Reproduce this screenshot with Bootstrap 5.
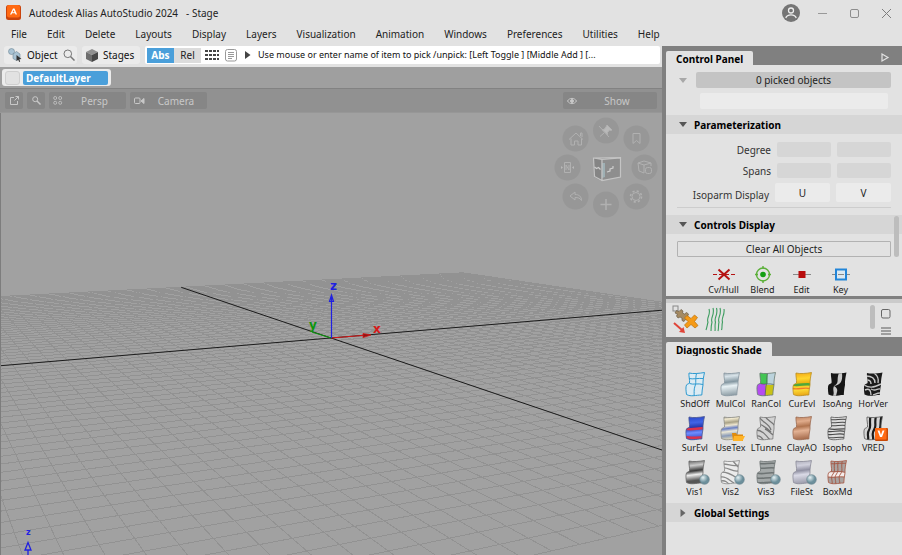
<!DOCTYPE html>
<html lang="en">
<head>
<meta charset="utf-8">
<meta name="viewport" content="width=device-width, initial-scale=1">
<title>Autodesk Alias AutoStudio 2024 - Stage</title>
<link href="https://cdn.jsdelivr.net/npm/bootstrap@5.3.0/dist/css/bootstrap.min.css" rel="stylesheet">
<style>
  body { font: 10px/14px "Noto Sans", "Open Sans", sans-serif; color: #222; background: #e2e2e2; }
  button, input { font: inherit; color: inherit; border: 0; padding: 0; min-width: 0; }
  button { background: none; }
  svg { display: block; flex: none; }
  .titlebar { height: 25px; padding: 0 0 0 6px; }
  .win-btn { width: 32px; height: 24px; }
  .menubar { height: 21px; padding: 0 11px 3px; gap: 20px; }
  .menubar a { color: #222; text-decoration: none; }
  .promptbar { height: 21px; padding: 0 2px 3px 4px; gap: 5px; }
  .tool { height: 18px; background: #ebebeb; border-radius: 3px; padding: 0 4px; gap: 5px; color: #111; }
  .tool-object { width: 73px; }
  .tool-stages { width: 58px; }
  .prompt { background: #fff; height: 18px; border-radius: 2px; padding-left: 2px; min-width: 0; }
  .seg { width: 27px; height: 15px; background: #dcdcdc; }
  .seg.on { background: #4a9fda; color: #fff; font-weight: 700; }
  .prompt-text { background: transparent; color: #111; outline: 0; padding: 0 0 0 7px; font-size: 9px; }
  .layerbar { height: 22px; background: #9f9f9f; padding: 2px 2px 0; border-bottom: 1px solid #828282; }
  .layer-chip { width: 109px; height: 17px; background: #ececec; border-radius: 3px; padding: 0 3px; gap: 3px; }
  .layer-box { width: 15px; height: 14px; background: #e2e2e2; border: 1px solid #cfcfcf; border-radius: 3px; appearance: none; }
  .layer-name { height: 14px; background: #4a9fda; color: #fff; font-weight: 700; text-align: left; padding-left: 3px; border-radius: 2px; }
  .viewbar { height: 24px; background: #919191; padding: 0 5px; gap: 4px; border-bottom: 1px solid #979797; }
  .vbtn { height: 17px; width: 18px; background: #868686; border-radius: 2px; color: #c8c8c8; }
  .vbtn-wide { width: 77px; padding-left: 4px; }
  .vbtn-show { width: 94px; padding-left: 4px; }
  .viewport { background: #a1a1a1; border-left: 1px solid #7d7d7d; min-height: 0; }
  .scene { width: 100%; height: 100%; }
  .work { min-width: 0; }
  .dock { width: 240px; background: #808080; padding: 5px 0 0 4px; }
  .ptab { background: #e2e2e2; color: #000; font-weight: 700; height: 15px; line-height: 17px; padding: 0 10px; border-radius: 2px 2px 0 0; }
  .ptab-row { height: 14px; }
  .panel-body { background: #e2e2e2; }
  .control-body { height: 231px; padding-top: 7px; }
  .picked { height: 16px; background: #c4c4c4; border-radius: 2px; }
  .picked-row { padding: 0 11px 0 13px; gap: 9px; }
  .name-in { height: 16px; background: #ebebeb; border-radius: 2px; margin: 5px 14px 6px 34px; }
  .section { height: 19px; background: #d6d6d6; color: #000; font-weight: 700; padding-left: 13px; gap: 7px; width: 100%; }
  .params { padding: 5px 11px 0; }
  .prow { height: 21px; gap: 6px; }
  .prow-label { color: #333; text-align: right; }
  .prow .cell { width: 54px; height: 15px; background: #d6d6d6; border-radius: 2px; }
  .cell-btn { width: 55px; height: 19px; background: #ebebeb; border-radius: 2px; }
  .rule { height: 1px; background: #cdcdcd; margin: 5px 11px 7px; }
  .clear-btn { height: 16px; border: 1px solid #b2b2b2; border-radius: 1px; line-height: 14px; }
  .clear-row { padding: 7px 11px 9px; }
  .disp-row { padding-left: 38px; }
  .disp-row button { width: 39px; font-size: 9px; }
  .shelf { height: 38px; background: #e2e2e2; margin: 3px 0 5px; border-top: 4px solid #cbcbcb; padding: 2px 11px 0 5px; gap: 6px; }
  .thumb-v { width: 5px; background: #bdbdbd; border-radius: 3px; }
  .over-thumb { right: 3px; top: 170px; height: 41px; }
  .shades { display: grid; grid-template-columns: repeat(6, 1fr); padding: 15px 11px 4px; row-gap: 4px; }
  .shades button { height: 40px; font-size: 9px; }
  .shades svg { margin: 0 auto; }
  .orb { fill: #979797; }
  .ghost { fill: none; stroke: #b1b1b1; stroke-width: 1; }
  .axis-label { font: 700 12px "DejaVu Sans", sans-serif; }
  .axis-label-sm { font: 700 8px "DejaVu Sans", sans-serif; }
</style>
</head>
<body class="vh-100 d-flex flex-column overflow-hidden">

<svg width="0" height="0" class="position-absolute" aria-hidden="true">
  <defs>
    <path id="patchShape" d="M5 1C9 2 15 1.500 20.500.500C19.500 5 18.800 9 19 13C18.300 16 18 20 17.800 23C12 23 7 25 2.500 22.500C2 19 1.500 15 2.500 13C3.500 11.500 5 12 5.500 11C6 8 4.500 4 5 1Z"/>
    <clipPath id="patch"><use href="#patchShape"/></clipPath>
    <use id="edge" href="#patchShape" fill="none" stroke-width=".8"/>
    <linearGradient id="gSteel" x1="0" y1="0" x2=".1" y2="1"><stop offset="0" stop-color="#8c99a2"/><stop offset=".2" stop-color="#d8e3e9"/><stop offset=".45" stop-color="#8497a1"/><stop offset=".62" stop-color="#e9f2f5"/><stop offset="1" stop-color="#93a2aa"/></linearGradient>
    <linearGradient id="gDark" x1="0" y1="0" x2=".1" y2="1"><stop offset="0" stop-color="#555"/><stop offset=".25" stop-color="#ccc"/><stop offset=".48" stop-color="#3a3a3a"/><stop offset=".65" stop-color="#eee"/><stop offset=".9" stop-color="#555"/></linearGradient>
    <linearGradient id="gClay" x1="0" y1="0" x2=".1" y2="1"><stop offset="0" stop-color="#b9805c"/><stop offset=".25" stop-color="#e0ac8c"/><stop offset=".47" stop-color="#b0744f"/><stop offset=".65" stop-color="#e3b294"/><stop offset="1" stop-color="#a96f50"/></linearGradient>
    <linearGradient id="gLilac" x1="0" y1="0" x2=".1" y2="1"><stop offset="0" stop-color="#a9a9b6"/><stop offset=".25" stop-color="#d0d0dc"/><stop offset=".47" stop-color="#9090a2"/><stop offset=".65" stop-color="#dadae6"/><stop offset="1" stop-color="#a0a0af"/></linearGradient>
    <linearGradient id="gBlue" x1="0" y1="0" x2=".1" y2="1"><stop offset="0" stop-color="#2540c0"/><stop offset=".3" stop-color="#4064e6"/><stop offset=".5" stop-color="#2336a8"/><stop offset=".7" stop-color="#6f8cff"/><stop offset="1" stop-color="#2540c0"/></linearGradient>
    <linearGradient id="gGold" x1="0" y1="0" x2=".1" y2="1"><stop offset="0" stop-color="#f0a010"/><stop offset=".3" stop-color="#ffd52e"/><stop offset=".5" stop-color="#e8b010"/><stop offset=".7" stop-color="#ffe13a"/><stop offset="1" stop-color="#e7a012"/></linearGradient>
    <linearGradient id="gTex" x1="0" y1="0" x2=".1" y2="1"><stop offset="0" stop-color="#777"/><stop offset=".14" stop-color="#f2ead0"/><stop offset=".3" stop-color="#a9a287"/><stop offset=".42" stop-color="#eee6cf"/><stop offset=".55" stop-color="#6a80c4"/><stop offset=".68" stop-color="#ece8d6"/><stop offset=".85" stop-color="#8a9bb8"/><stop offset="1" stop-color="#d8d2b6"/></linearGradient>
    <radialGradient id="gBall" cx=".35" cy=".3"><stop offset="0" stop-color="#e4f0f3"/><stop offset="1" stop-color="#6c8f9b"/></radialGradient>
    <g id="ball"><circle cx="20.500" cy="19.500" r="4.800" fill="url(#gBall)" stroke="#66828c" stroke-width=".6"/></g>
  </defs>
</svg>

<header class="titlebar d-flex align-items-center">
  <svg width="15" height="15" viewBox="0 0 15 15"><rect width="15" height="15" rx="2.500" fill="#c9430c"/><rect width="13" height="12.500" x="1" rx="2" fill="#ff6a13"/><path d="M4 9.500L7 3.500h1.500L11 9.500H9.500L9 8.300H6L5.500 9.500ZM6.500 7.200h2L7.600 5Z" fill="#fff"/></svg>
  <span class="ps-2">Autodesk Alias AutoStudio 2024</span>
  <span class="ps-2">- Stage</span>
  <div class="ms-auto d-flex align-items-center">
    <button type="button" aria-label="Account" class="me-1"><svg width="20" height="18" viewBox="0 0 20 18"><circle cx="9" cy="9" r="9" fill="#757575"/><g fill="none" stroke="#eee" stroke-width="1.300"><circle cx="9" cy="6.500" r="2.500"/><path d="M3.800 14C5 9.800 13 9.800 14.200 14"/></g></svg></button>
    <button type="button" aria-label="Minimize" class="win-btn"><svg width="32" height="24" fill="none" stroke="#999"><path d="M12 12.500h9"/></svg></button>
    <button type="button" aria-label="Maximize" class="win-btn"><svg width="32" height="24" fill="none" stroke="#8d8d8d"><rect x="12.500" y="8.500" width="8" height="8" rx="1.500"/></svg></button>
    <button type="button" aria-label="Close" class="win-btn"><svg width="32" height="24" fill="none" stroke="#7d7d7d"><path d="M12 8l9 9M21 8l-9 9"/></svg></button>
  </div>
</header>

<nav class="menubar d-flex align-items-center">
  <a href="#">File</a><a href="#">Edit</a><a href="#">Delete</a><a href="#">Layouts</a><a href="#">Display</a><a href="#">Layers</a><a href="#">Visualization</a><a href="#">Animation</a><a href="#">Windows</a><a href="#">Preferences</a><a href="#">Utilities</a><a href="#">Help</a>
</nav>

<main class="d-flex flex-fill overflow-hidden">
  <div class="work d-flex flex-column flex-fill">
    <div class="promptbar d-flex align-items-center">
      <button type="button" class="tool tool-object d-flex align-items-center">
        <svg width="14" height="14" viewBox="0 0 14 14"><g fill="#a9c3d4" stroke="#6f8795" stroke-width=".6"><circle cx="3.500" cy="3.500" r="3"/><path d="M5 6l3.500-2.500L12 6v4.500L8.500 12.500 5 10.500Z"/></g><path d="M8.500 7l5 4-2.200.3.900 2.200-1 .4-1-2.200L8.500 13Z" fill="#333"/></svg>
        <span>Object</span>
        <svg width="12" height="12" viewBox="0 0 12 12" fill="none" stroke="#777"><circle cx="4.800" cy="4.800" r="3.800"/><path d="M7.500 7.500l4 4" stroke-width="1.500"/></svg>
      </button>
      <button type="button" class="tool tool-stages d-flex align-items-center">
        <svg width="12" height="13" viewBox="0 0 12 13"><path d="M6 0l6 3-6 3-6-3Z" fill="#909090"/><path d="M0 3l6 3v7L0 10Z" fill="#6e6e6e"/><path d="M12 3L6 6v7l6-3Z" fill="#484848"/></svg>
        <span>Stages</span>
      </button>
      <div class="prompt d-flex align-items-center flex-fill">
        <button type="button" class="seg on">Abs</button>
        <button type="button" class="seg">Rel</button>
        <svg class="ms-1" width="16" height="12" viewBox="0 0 16 12" fill="#444"><path d="M0 1h3v2H0zM4 1h3v2H4zM8 1h3v2H8zM12 1h2v2h-2zM0 5h3v2H0zM4 5h3v2H4zM8 5h3v2H8zM12 5h2v2h-2zM0 9h3v2H0zM4 9h3v2H4zM8 9h3v2H8zM12 9h2v2h-2z"/></svg>
        <svg class="ms-1" width="12" height="13" viewBox="0 0 12 13" fill="none" stroke="#999"><rect x=".5" y=".5" width="11" height="11.500" rx="2"/><path d="M3 3.500h6M3 5.500h6M3 7.500h6M3 9.500h4"/></svg>
        <svg class="ms-2" width="6" height="8" viewBox="0 0 6 8"><path d="M0 0l5.500 4L0 8Z" fill="#444"/></svg>
        <input class="prompt-text flex-fill" type="text" aria-label="Prompt" value="Use mouse or enter name of item to pick /unpick: [Left Toggle ] [Middle Add ] [...">
      </div>
    </div>

    <div class="layerbar">
      <div class="layer-chip d-flex align-items-center">
        <input type="checkbox" class="layer-box m-0" aria-label="Layer visible">
        <button type="button" class="layer-name flex-fill">DefaultLayer</button>
      </div>
    </div>

    <div class="viewbar d-flex align-items-center">
      <button type="button" class="vbtn d-flex align-items-center justify-content-center" aria-label="Detach"><svg width="9" height="9" viewBox="0 0 9 9" fill="none" stroke="currentColor"><path d="M4 1.500H.500v7h7V5M5.500.500h3v3M8.500.500L4.500 4.500"/></svg></button>
      <button type="button" class="vbtn d-flex align-items-center justify-content-center" aria-label="Look at"><svg width="9" height="9" viewBox="0 0 9 9" fill="none" stroke="currentColor"><circle cx="3.200" cy="3.200" r="2.500"/><path d="M5 5l3.500 3.500" stroke-width="1.400"/></svg></button>
      <button type="button" class="vbtn vbtn-wide d-flex align-items-center"><svg width="10" height="9" viewBox="0 0 10 9" fill="none" stroke="currentColor" stroke-width=".8"><circle cx="2.200" cy="2" r="1.500"/><circle cx="7.200" cy="2" r="1.500"/><circle cx="2.200" cy="6.800" r="1.500"/><circle cx="7.200" cy="6.800" r="1.500"/></svg><span class="flex-fill">Persp</span></button>
      <button type="button" class="vbtn vbtn-wide d-flex align-items-center"><svg width="11" height="8" viewBox="0 0 11 8" fill="none" stroke="currentColor"><rect x=".5" y="1" width="5.500" height="5.500" rx="1"/><path d="M7 4l3-2.500v5Z" fill="currentColor"/></svg><span class="flex-fill">Camera</span></button>
      <button type="button" class="vbtn vbtn-show d-flex align-items-center ms-auto"><svg width="10" height="8" viewBox="0 0 10 8" fill="none" stroke="currentColor"><path d="M.5 4C2.500.500 7.500.500 9.500 4 7.500 7.500 2.500 7.500.500 4Z"/><circle cx="5" cy="4" r="1.500" fill="currentColor"/></svg><span class="flex-fill">Show</span></button>
    </div>

    <div class="viewport flex-fill">
      <svg class="scene" viewBox="1 113 661 442" preserveAspectRatio="xMidYMin slice" role="img" aria-label="Perspective view">
        <path id="grid" fill="none" stroke="#929292" stroke-width="1" shape-rendering="crispEdges"/>
        <path id="axes" fill="none" stroke="#1c1c1c" stroke-width="1"/>
        <g fill="none" stroke-width="1.200">
          <path d="M331 338L312 332" stroke="#0c960c"/>
          <path d="M331 338L368 335" stroke="#d81818"/><path d="M363 333.500l8 1.500-8 2.500Z" fill="#8c1616" stroke="#d81818" stroke-width=".8"/>
          <path d="M331.500 338V296M329.500 301.500h4L331.500 295Z" stroke="#2020e0"/>
        </g>
        <text class="axis-label" x="330" y="290" fill="#2020e0">z</text>
        <text class="axis-label" x="309" y="329" fill="#0c960c">y</text>
        <text class="axis-label" x="373" y="333" fill="#d81818">x</text>
        <text class="axis-label-sm" x="26" y="535" fill="#2020e0">z</text>
        <path d="M28 555v-5M25 550h6L28 542.500Z" fill="none" stroke="#2020e0" stroke-width="1.300"/>
        <g class="orb">
          <circle cx="575.500" cy="138.500" r="13"/><circle cx="606" cy="130.500" r="13"/><circle cx="636.500" cy="138.500" r="13"/>
          <circle cx="567.500" cy="167.500" r="13"/><circle cx="644.500" cy="167.500" r="13"/>
          <circle cx="575.500" cy="196.500" r="13"/><circle cx="606" cy="204.500" r="13"/><circle cx="636.500" cy="196.500" r="13"/>
        </g>
        <g class="ghost">
          <path d="M569 139.500l7-6.500 7 6.500M571 138.500v6.500h3.500v-4h3.500v4h3.500v-6.500M580.500 136v-3h1.500v4"/>
          <path d="M599 126l10 11M600 136.500l4.500-4"/><path d="M607 125l5 5-1.500.500-1-.500-2 2.500v2l-5.500-5h2l2-2.500Z" fill="#b9b9b9"/>
          <path d="M633 133.500h7v10l-3.500-3-3.500 3Z"/>
          <path d="M564.500 162.500h6v10h-6ZM566 170v-5l3 5v-5"/><path d="M561 166v3l2-1.500ZM574 166v3l-2-1.500Z" fill="#b9b9b9" stroke="none"/>
          <path d="M638 163l6-2 7 2v3M638 163l1 8 5 2M638 163l6 2 7-2M644 165v8"/><rect x="645.500" y="167.500" width="6" height="6" rx="2"/>
          <path d="M570 196l5-4v2.500c4 0 6.500 2 6.500 6-1.500-2.500-3.500-3-6.500-3v2.500Z"/>
          <path d="M606 199v11M600.500 204.500h11" stroke-width="1.500"/>
          <circle cx="636" cy="196.500" r="4"/><circle cx="636" cy="196.500" r="5.500" stroke-width="1.600" stroke-dasharray="2.160"/>
        </g>
        <path d="M593.500 158l8 1.500V181l-7.500-4Z" fill="#858585"/><path d="M602 159.500l18-1.500v19l-18 3.500Z" fill="#8e8e8e"/><path d="M602 163l3 0v14l-3 1Z" fill="#9fb0b4"/>
        <path d="M593.500 158l27-0.500v19.500l-18.500 3.500-7.500-4ZM593.500 158l8.500 1.500V180M602 159.500l18.500-1.500" fill="none" stroke="#c4c4c4" stroke-width="1.200"/>
        <path d="M594.500 167l2 1.500 2-1 2 2M607 172l3-1v-2l3-1v-2" stroke="#cfcfcf" stroke-width="1.200" fill="none"/>
      </svg>
    </div>
  </div>

  <aside class="dock d-flex flex-column flex-shrink-0 position-relative">
    <div class="ptab-row d-flex justify-content-between align-items-start">
      <div class="ptab">Control Panel</div>
      <button type="button" aria-label="Panel menu" class="me-2 pe-1"><svg width="9" height="12" viewBox="0 0 9 12" fill="none" stroke="#e2e2e2" stroke-width="1.200"><path d="M1 3l6 3.500-6 3.500Z"/></svg></button>
    </div>
    <div class="panel-body control-body">
      <div class="picked-row d-flex align-items-center">
        <svg width="8" height="5" viewBox="0 0 8 5"><path d="M0 0h8L4 5Z" fill="#a8a8a8"/></svg>
        <button type="button" class="picked flex-fill">0 picked objects</button>
      </div>
      <div class="d-flex"><input class="name-in flex-fill" type="text" aria-label="Object name"></div>
      <button type="button" class="section d-flex align-items-center"><svg width="8" height="5" viewBox="0 0 8 5"><path d="M0 0h8L4 5Z" fill="#555"/></svg>Parameterization</button>
      <div class="params">
        <div class="prow d-flex align-items-center"><label class="prow-label flex-fill" for="degU">Degree</label><input class="cell" id="degU" type="text"><input class="cell" type="text" aria-label="Degree V"></div>
        <div class="prow d-flex align-items-center"><label class="prow-label flex-fill" for="spanU">Spans</label><input class="cell" id="spanU" type="text"><input class="cell" type="text" aria-label="Spans V"></div>
        <div class="prow d-flex align-items-end"><span class="prow-label flex-fill">Isoparm Display</span><button type="button" class="cell-btn">U</button><button type="button" class="cell-btn">V</button></div>
      </div>
      <div class="rule"></div>
      <button type="button" class="section d-flex align-items-center"><svg width="8" height="5" viewBox="0 0 8 5"><path d="M0 0h8L4 5Z" fill="#555"/></svg>Controls Display</button>
      <div class="clear-row d-flex"><button type="button" class="clear-btn flex-fill">Clear All Objects</button></div>
      <div class="disp-row d-flex">
        <button type="button"><svg class="mx-auto" width="22" height="17" viewBox="0 0 22 17" fill="none" stroke="#b51212"><path d="M0 8.500h22" stroke-dasharray="4 2"/><path d="M5.500 3.500l11 10M16.500 3.500l-11 10" stroke-width="2"/></svg>Cv/Hull</button>
        <button type="button"><svg class="mx-auto" width="22" height="17" viewBox="0 0 22 17" fill="none" stroke="#5cb03a"><circle cx="11" cy="8.500" r="6.500" stroke-width="1.400"/><path d="M11 0v3M11 14v3M3 8.500h3M16 8.500h3" stroke-width="1.400"/><circle cx="11" cy="8.500" r="2.800" fill="#12a012" stroke="none"/></svg>Blend</button>
        <button type="button"><svg class="mx-auto" width="22" height="17" viewBox="0 0 22 17"><path d="M2 8.500h18" stroke="#888"/><path d="M7.500 5h7v7h-7z" fill="#b80d0d"/></svg>Edit</button>
        <button type="button"><svg class="mx-auto" width="22" height="17" viewBox="0 0 22 17" fill="none" stroke="#2285d8"><path d="M2 8.500h18" stroke="#888"/><path d="M6 3.500h10v10H6z" stroke-width="2" fill="#dce8f0"/><path d="M8 8.500h6" stroke="#888"/></svg>Key</button>
      </div>
    </div>

    <div class="shelf d-flex align-items-start">
      <button type="button" aria-label="Transform tool"><svg width="28" height="30" viewBox="0 0 28 30"><rect x="2" y="1" width="5" height="5" fill="none" stroke="#888"/><path d="M5.500 5.500l2.500 1 2-2 2 1.500-.5 2 2 1 2-1.500 2 1.500-1 2.500 2 1.500-1.500 2-2.500-.5-1.500 2-2-1 0-2.500-2-1-2 1-1.500-2 1-2-2.500-1Z" fill="#a58a62" stroke="#6b5c45" stroke-width=".7"/><path d="M16 10.500l4 3 3.500-3.500 3 2.500-3 4 3.500 4-3 2.500-4-3.500-4 3.500-2.500-3 3.500-3.500-3.500-3.500Z" fill="#f59a16" stroke="#b9700c" stroke-width=".7"/><path d="M3 18l8 7" stroke="#e04438" stroke-width="2"/><path d="M14 28l-6-1 4.500-5Z" fill="#e04438"/></svg></button>
      <button type="button" aria-label="Curves tool"><svg width="20" height="28" viewBox="0 0 20 28" fill="none" stroke="#3d9c5f" stroke-width="1.100"><path d="M4 4c2 6-3 9-1 13-1 4-1 5-2 8M8 3c2 7-3 10-1 14-1 4-1 6-1 9M11.500 3c2 7-3 10-1 14-1 4 0 6-.500 9M15 3c2 7-3 10-1 14-1 4 0 6-1 9M19 4c1 6-3 9-1.500 13-1 4 0 5-1 8"/></svg></button>
      <div class="thumb-v ms-auto align-self-stretch mb-2"></div>
      <div class="d-flex flex-column gap-2 pt-1">
        <svg width="10" height="10" viewBox="0 0 10 10" fill="none" stroke="#666"><rect x=".5" y=".5" width="8.500" height="8.500" rx="1.500"/></svg>
        <svg width="10" height="9" viewBox="0 0 10 9" stroke="#888" stroke-width="1.500"><path d="M0 1h10M0 4h10M0 7h10"/></svg>
      </div>
    </div>

    <div class="ptab-row d-flex"><div class="ptab">Diagnostic Shade</div></div>
    <div class="panel-body flex-fill">
      <div class="shades">
        <button type="button"><svg width="30" height="25" viewBox="-4 0 30 25"><use href="#patchShape" fill="#dcebf3" stroke="#2e9ad0"/><path d="M5.500 11.500C9 13 14 11 19 12.500M12.500 1.500C11 8 12.500 11 11 14 9.500 18 10.500 21 10 24M5 6.500C9 7.500 14 6 19 6.500" fill="none" stroke="#2e9ad0"/></svg>ShdOff</button>
        <button type="button"><svg width="30" height="25" viewBox="-4 0 30 25"><use href="#patchShape" fill="url(#gSteel)"/><use href="#edge" stroke="#8796a0"/></svg>MulCol</button>
        <button type="button"><svg width="30" height="25" viewBox="-4 0 30 25"><g clip-path="url(#patch)"><rect width="26" height="25" fill="#bcd3dc"/><rect width="12.500" height="12" fill="#42c553"/><rect y="12" width="11" height="13" fill="#b44cf0"/><rect x="10.500" y="13" width="10" height="12" fill="#c9c216"/></g><path d="M12.500 1.500C11 8 12.500 11 11 14L10 24M5.500 11.500C9 13 14 11 19 12.500" fill="none" stroke="#56645c" stroke-width=".8"/><use href="#edge" stroke="#6a7a70"/></svg>RanCol</button>
        <button type="button"><svg width="30" height="25" viewBox="-4 0 30 25"><g clip-path="url(#patch)"><rect width="26" height="25" fill="url(#gGold)"/><path d="M1 12.500C9 14 14 11 20 12.500" fill="none" stroke="#4fa83a" stroke-width="2.500"/><path d="M1 16.500C8 18 12 15 19 16.500" fill="none" stroke="#f07a2a" stroke-width="1.500"/></g><use href="#edge" stroke="#b98d20"/></svg>CurEvl</button>
        <button type="button"><svg width="30" height="25" viewBox="-4 0 30 25"><g clip-path="url(#patch)"><rect width="26" height="25" fill="#161616"/><path d="M13 1C10 7 14 11 8 14c6-1 9-4 8-13ZM8 14C6 18 9 20 7 24h3C11 19 13 17 8 14Z" fill="#c9c9c9"/></g></svg>IsoAng</button>
        <button type="button"><svg width="30" height="25" viewBox="-4 0 30 25"><g clip-path="url(#patch)"><rect width="26" height="25" fill="#1b1b1b"/><path d="M4 4c6 0 9 2 9 7M12 1c4 3 5 6 4 10M2 13c5 3 9 3 17-1M3 18c4-2 6 0 6 5M9 17c5 3 6-1 9 0M11 23c3-1 4-2 7-2M5 8c3 0 4 2 4 4" fill="none" stroke="#c4c4c4" stroke-width="1.400"/></g></svg>HorVer</button>

        <button type="button"><svg width="30" height="25" viewBox="-4 0 30 25"><g clip-path="url(#patch)"><rect width="26" height="25" fill="url(#gBlue)"/><path d="M1 12.500C9 14.500 14 11.500 20 12.500M1 21C8 23 12 21 19 21.500" fill="none" stroke="#d8324e" stroke-width="2.500"/></g><use href="#edge" stroke="#4a5590"/></svg>SurEvl</button>
        <button type="button"><svg width="30" height="25" viewBox="-4 0 30 25"><use href="#patchShape" fill="url(#gTex)"/><use href="#edge" stroke="#8d8d85"/><path d="M13 17h4l1 1.500h6V25H14Z" fill="#e08c0c"/><path d="M15 20h11l-2.500 5H14Z" fill="#ffb428"/></svg>UseTex</button>
        <button type="button"><svg width="30" height="25" viewBox="-4 0 30 25"><g clip-path="url(#patch)"><rect width="26" height="25" fill="#d2d2d2"/><path d="M4 1c4 6 10 6 12 13M10 0c2 5 7 5 10 10M2 7c6 2 10 5 14 9M1 14c6 0 10 5 14 10M1 20c4-1 6 2 8 5M10 13c4 1 5 5 9 6" fill="none" stroke="#757575" stroke-width="1.300"/></g><use href="#edge" stroke="#777"/></svg>LTunne</button>
        <button type="button"><svg width="30" height="25" viewBox="-4 0 30 25"><use href="#patchShape" fill="url(#gClay)"/><use href="#edge" stroke="#9a6a50"/></svg>ClayAO</button>
        <button type="button"><svg width="30" height="25" viewBox="-4 0 30 25"><g clip-path="url(#patch)"><rect width="26" height="25" fill="#dcdcdc"/><path d="M4 3.500c6 1 10-1 17 0M4 6.500c6 1 10-1 16 0M4 9.500c6 1 10-1 16 0M2 12.500c6 2 10 0 18 .5M2 15.500c6 1 10-2 17 0M2 18.500c6 1 10-2 17 0M2 21.500c6 1 10-1 17 0" fill="none" stroke="#4a4a4a" stroke-width="1.200"/></g><use href="#edge" stroke="#555"/></svg>Isopho</button>
        <button type="button"><svg width="30" height="25" viewBox="-4 0 30 25"><g clip-path="url(#patch)"><rect width="26" height="25" fill="#d5d5d5"/><path d="M8.500 0C7 8 9.500 10 7 14s0 6-1 11M14 0c-2 8 1 10-2 14s0 6-1 11M19.500 0c-2 8 0 10-2 14s0 6 0 11" fill="none" stroke="#1c1c1c" stroke-width="2.200"/></g><use href="#edge" stroke="#555"/><rect x="13" y="12" width="13" height="13" rx="1" fill="#c84a08"/><rect x="13" y="12" width="11.500" height="11.500" rx="1" fill="#ff6a13"/><path d="M15.500 14.500h2L19 19l1.500-4.500h2L20 21h-2Z" fill="#fff"/></svg>VRED</button>

        <button type="button"><svg width="30" height="25" viewBox="-4 0 30 25"><use href="#patchShape" fill="url(#gDark)"/><use href="#edge" stroke="#666"/><use href="#ball"/></svg>Vis1</button>
        <button type="button"><svg width="30" height="25" viewBox="-4 0 30 25"><g clip-path="url(#patch)"><rect width="26" height="25" fill="#ebebeb"/><path d="M4 4c6 0 10 3 15 1M4 8c5-1 9 4 15 3M3 12c5 0 9 2 15 6M2 17c5-1 8 3 13 6M2 21c4-1 6 1 9 4M14 1l5 6" fill="none" stroke="#888" stroke-width="1.300"/></g><use href="#edge" stroke="#888"/><use href="#ball"/></svg>Vis2</button>
        <button type="button"><svg width="30" height="25" viewBox="-4 0 30 25"><g clip-path="url(#patch)"><rect width="26" height="25" fill="#a3a8a8"/><path d="M4 3.500c6 1 10-1 17 0M4 8c6 1 10-1 16 0M2 13c6 2 10-1 18 0M2 18c6 1 10-1 17 0M2 22.500c6 1 10-1 17 0" fill="none" stroke="#6e7474" stroke-width="1.600"/></g><use href="#edge" stroke="#707676"/><use href="#ball"/></svg>Vis3</button>
        <button type="button"><svg width="30" height="25" viewBox="-4 0 30 25"><use href="#patchShape" fill="url(#gLilac)"/><use href="#edge" stroke="#8a8a98"/><use href="#ball"/></svg>FileSt</button>
        <button type="button"><svg width="30" height="25" viewBox="-4 0 30 25"><g clip-path="url(#patch)"><rect width="26" height="25" fill="#aaa3a0"/><rect y="12" width="26" height="5" fill="#f4ecea"/><path d="M9 0C7 8 10 10 7 14s0 6-1 11M12.500 0c-2 8 1 10-2 14s0 6-1 11M16.500 0c-2 8 1 10-2 14s0 6-1 11M3 3.500c6 1 10-1 18 0M3 11.500c6 1 10-1 17 1M2 17c6 1 10-1 17 0" fill="none" stroke="#a5533f" stroke-width=".9"/></g><use href="#edge" stroke="#a5533f"/></svg>BoxMd</button>
      </div>
      <button type="button" class="section d-flex align-items-center"><svg width="8" height="8" viewBox="0 0 8 8"><path d="M1.500 0L6.500 4l-5 4Z" fill="#666"/></svg>Global Settings</button>
    </div>
    <div class="thumb-v over-thumb position-absolute" aria-hidden="true"></div>
  </aside>
</main>

<script>
  // Ground plane: homogeneous projection of a square grid with two vanishing points.
  const cells = 34, halfX = 0.257, halfY = 0.511;
  const origin = [331, 338], vanishX = [2120, 188], vanishY = [-112, 188];
  function project(s, t) {
    const p = s * halfX, q = t * halfY, w = 1 + p + q;
    return [0, 1].map(i => ((origin[i] + p * vanishX[i] + q * vanishY[i]) / w).toFixed(1)).join(' ');
  }
  const line = (a, b, c, d) => 'M' + project(a, b) + 'L' + project(c, d);
  let d = '';
  for (let i = -cells; i <= cells; i++) {
    const k = i / cells;
    d += line(k, -1, k, 1) + line(-1, k, 1, k);
  }
  document.getElementById('grid').setAttribute('d', d);
  document.getElementById('axes').setAttribute('d', line(-1, 0, 1, 0) + line(0, -1, 0, 1));
</script>
<script src="https://cdn.jsdelivr.net/npm/bootstrap@5.3.0/dist/js/bootstrap.bundle.min.js"></script>
</body>
</html>
